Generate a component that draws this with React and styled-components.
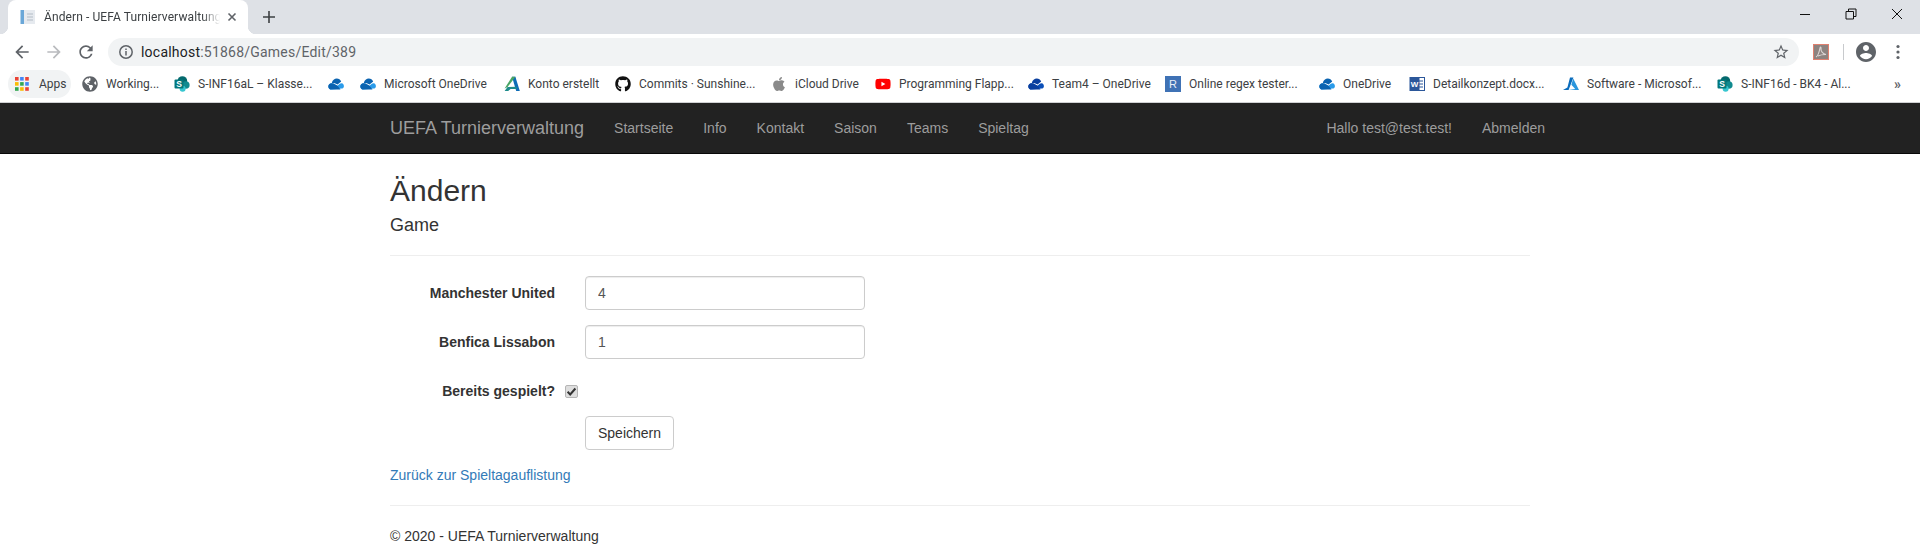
import React from 'react';
import styled, { createGlobalStyle } from 'styled-components';
import { FaGithub, FaApple, FaYoutube, FaGlobeAmericas } from 'react-icons/fa';

const GlobalStyle = createGlobalStyle`
  html, body {
    margin: 0;
    padding: 0;
    background: #fff;
    overflow: hidden;
  }
  body {
    font-family: "Liberation Sans", Arial, sans-serif;
    font-size: 14px;
    line-height: 20px;
    color: #333;
  }
  * { box-sizing: border-box; }
`;

const UI_FONT = `Roboto, "Noto Sans", Arial, sans-serif`;

/* browser chrome */
const TabStrip = styled.div`
  display: flex;
  align-items: stretch;
  height: 34px;
  padding-left: 8px;
  background: #dee1e6;
`;

const Tab = styled.div`
  position: relative;
  display: flex;
  align-items: center;
  width: 240px;
  padding-left: 12px;
  background: #fff;
  border-radius: 8px 8px 0 0;
  &::before, &::after {
    content: '';
    position: absolute;
    bottom: 0;
    width: 8px;
    height: 8px;
  }
  &::before {
    left: -8px;
    background: radial-gradient(circle at 0 0, #dee1e6 8px, #fff 8.5px);
  }
  &::after {
    right: -8px;
    background: radial-gradient(circle at 100% 0, #dee1e6 8px, #fff 8.5px);
  }
`;

const TabTitle = styled.span`
  width: 176px;
  margin-left: 8px;
  overflow: hidden;
  white-space: nowrap;
  font-family: ${UI_FONT};
  font-size: 12px;
  letter-spacing: 0.1px;
  color: #3c4043;
  -webkit-mask-image: linear-gradient(to right, #000 90%, transparent);
  mask-image: linear-gradient(to right, #000 90%, transparent);
`;

const TabClose = styled.span`
  display: flex;
  margin-left: 7px;
  color: #5f6368;
`;

const NewTab = styled.span`
  display: flex;
  align-items: center;
  margin-left: 15px;
  color: #3c4043;
`;

const WindowControls = styled.div`
  display: flex;
  margin-left: auto;
`;

const WindowButton = styled.span`
  display: flex;
  justify-content: center;
  align-items: flex-start;
  width: 46px;
  padding-top: 8px;
  color: #111;
`;

const Toolbar = styled.div`
  display: flex;
  align-items: center;
  height: 32px;
  padding: 4px 0 0 6px;
  background: #fff;
`;

const NavButton = styled.span`
  display: flex;
  justify-content: center;
  width: 32px;
  color: ${p => (p.$disabled ? '#b9bbbe' : '#5f6368')};
`;

const Omnibox = styled.div`
  display: flex;
  align-items: center;
  width: 1691px;
  height: 28px;
  margin-left: 6px;
  padding: 0 9px 0 10px;
  border-radius: 14px;
  background: #f1f3f4;
  font-family: ${UI_FONT};
  font-size: 14px;
  letter-spacing: 0.22px;
  color: #5f6368;
`;

const UrlHost = styled.span`
  margin-left: 7px;
  color: #202124;
`;

const StarButton = styled.span`
  display: flex;
  margin-left: auto;
  color: #5f6368;
`;

const PdfBadge = styled.span`
  display: flex;
  width: 16px;
  height: 16px;
  margin-left: 14px;
  background: #8d8380;
  border: 1px solid #e0806f;
`;

const ToolbarDivider = styled.span`
  width: 1px;
  height: 16px;
  margin-left: 14px;
  background: #c8cacd;
`;

const Avatar = styled.span`
  display: flex;
  margin-left: 12px;
  color: #5f6368;
`;

const MenuDots = styled.span`
  display: flex;
  margin-left: 20px;
  color: #5f6368;
`;

const BookmarkBar = styled.div`
  display: flex;
  align-items: center;
  height: 37px;
  padding: 0 0 1px 8px;
  background: #fff;
  border-bottom: 1px solid #d0d1d3;
  font-family: ${UI_FONT};
  font-size: 12px;
  color: #3c4043;
  white-space: nowrap;
`;

const AppsChip = styled.span`
  display: flex;
  align-items: center;
  gap: 10px;
  width: 63px;
  height: 28px;
  margin-right: 3px;
  padding-left: 7px;
  border-radius: 14px;
  background: #f1f3f4;
`;

const Bookmark = styled.span`
  display: flex;
  align-items: center;
  flex: none;
  gap: 8px;
  width: ${p => p.$width}px;
  padding-left: 8px;
`;

const BookmarkIcon = styled.span`
  display: flex;
  flex: none;
  width: 16px;
  height: 16px;
  color: ${p => p.$color || 'inherit'};
`;

const Chevrons = styled.span`
  margin-left: 34px;
  font-size: 14px;
  font-weight: 700;
  color: #5f6368;
`;

/* site */
const Navbar = styled.nav`
  height: 51px;
  background: #222;
  border-bottom: 1px solid #080808;
`;

const NavInner = styled.div`
  display: flex;
  width: 1170px;
  margin: 0 auto;
`;

const Brand = styled.a`
  padding: 15px;
  font-size: 18px;
  line-height: 20px;
  color: #9d9d9d;
`;

const NavLink = styled.a`
  padding: 15px;
  line-height: 20px;
  color: #9d9d9d;
`;

const NavRight = styled.div`
  display: flex;
  margin-left: auto;
  margin-right: -15px;
`;

const Container = styled.main`
  width: 1170px;
  margin: 0 auto;
  padding: 20px 15px 0;
`;

const Title = styled.h2`
  margin: 0 0 8px;
  font-size: 30px;
  font-weight: 500;
  line-height: 33px;
`;

const Subtitle = styled.h4`
  margin: 0 0 10px;
  font-size: 18px;
  font-weight: 500;
  line-height: 20px;
`;

const Rule = styled.hr`
  height: 1px;
  margin: 20px 0;
  border: 0;
  background: #eee;
`;

const FormRow = styled.div`
  display: flex;
  margin-bottom: 15px;
`;

const FieldLabel = styled.label`
  width: 165px;
  padding-top: 7px;
  font-weight: 700;
  text-align: right;
`;

const TextInput = styled.input`
  width: 280px;
  height: 34px;
  margin-left: 30px;
  padding: 6px 12px;
  border: 1px solid #ccc;
  border-radius: 4px;
  font: inherit;
  color: #555;
  box-shadow: inset 0 1px 1px rgba(0, 0, 0, 0.075);
`;

const CheckBox = styled.input`
  appearance: none;
  width: 13px;
  height: 13px;
  margin: 11px 0 0 10px;
  border: 1px solid #b5b5b5;
  border-radius: 2px;
  background: #dedede url("data:image/svg+xml,%3Csvg xmlns='http://www.w3.org/2000/svg' viewBox='0 0 13 13'%3E%3Cpath d='M2.6 6.8l2.6 2.7 5.2-6' fill='none' stroke='%23333' stroke-width='2'/%3E%3C/svg%3E") center / 13px no-repeat;
`;

const SaveButton = styled.button`
  height: 34px;
  margin-left: 195px;
  padding: 6px 12px;
  border: 1px solid #ccc;
  border-radius: 4px;
  background: #fff;
  font: inherit;
  color: #333;
`;

const BackLink = styled.a`
  display: block;
  color: #337ab7;
`;

const Footer = styled.footer`
  margin: 0;
`;

/* small drawings */
const OneDriveCloud = ({ color = '#0b63b0', light = '#2a9bea' }) => (
  <svg viewBox="0 0 16 16" width="16" height="16">
    <path d="M3.8 7C4.4 4.2 6.5 2.6 8.8 2.6c2 0 3.6 1.1 4.4 3L9.6 8.6 6.8 7.2z" fill={color} />
    <path d="M3.6 13.6C1.7 13.6.3 12.2.3 10.4c0-1.8 1.4-3.2 3.2-3.2 1.3 0 2.4.4 3.2 1l2.8 1.5 2-1.7c.8-.6 1.6-.9 2.3-.7 1.2.3 2.1 1.4 2.1 2.9 0 1.4-1.1 2.4-2.4 2.4z" fill={light} />
    <path d="M3.6 13.6C1.7 13.6.3 12.2.3 10.4c0-1.8 1.4-3.2 3.2-3.2 1.3 0 2.4.4 3.2 1l2.8 1.5 3 3.9z" fill={color} />
  </svg>
);

const SharePointIcon = () => (
  <svg viewBox="0 0 16 16" width="16" height="16">
    <circle cx="8.4" cy="5" r="4.8" fill="#04696d" />
    <circle cx="11.8" cy="9" r="3.8" fill="#108a8f" />
    <circle cx="8.6" cy="12.8" r="3" fill="#37c6d0" />
    <rect x="0.5" y="3.4" width="9" height="9.2" rx="1" fill="#03787c" />
    <text x="5" y="10.8" textAnchor="middle" fontSize="8.5" fontWeight="700" fontFamily="Liberation Sans" fill="#fff">S</text>
  </svg>
);

const AutodeskIcon = () => (
  <svg viewBox="0 0 16 16" width="16" height="16">
    <path d="M8 .8h3.4L15.8 15h-3.6z" fill="#0d6cb6" />
    <path d="M8 .8h3.4L3.6 11 .6 12.6z" fill="#4aa564" />
    <path d="M.6 15l3-4 8.8-.2.6 2.2-6.4 0-2.4 2z" fill="#1d8b8b" />
  </svg>
);

const WordIcon = () => (
  <svg viewBox="0 0 16 16" width="16" height="16">
    <rect x="6" y="1.5" width="9.5" height="13" fill="#fff" stroke="#2b579a" />
    <path d="M9 5h5M9 8h5M9 11h5" stroke="#2b579a" />
    <rect x="0.5" y="1" width="10" height="14" fill="#2b579a" />
    <text x="5.5" y="11" textAnchor="middle" fontSize="8" fontWeight="700" fontFamily="Liberation Sans" fill="#fff">W</text>
  </svg>
);

const RegexIcon = () => (
  <svg viewBox="0 0 16 16" width="16" height="16">
    <rect width="16" height="16" fill="#3f72b5" />
    <text x="8" y="12" textAnchor="middle" fontSize="11" fontFamily="Liberation Sans" fill="#e8eef7">R</text>
  </svg>
);

const AzureIcon = () => (
  <svg viewBox="0 0 16 16" width="16" height="16">
    <path d="M7 1.6h3.4L5.6 14H0L4.4 11.4z" fill="#0a6cbc" />
    <path d="M10.2 2.4L16 14H5.6l6.6-1-3.8-4.2z" fill="#2a96dc" />
  </svg>
);

const AppsGrid = () => (
  <svg viewBox="0 0 14 14" width="14" height="14">
    {['#ea4335', '#4285f4', '#ea4335', '#fbbc05', '#34a853', '#4285f4', '#34a853', '#fbbc05', '#ea4335'].map((c, i) => (
      <rect key={i} x={(i % 3) * 5.1} y={Math.floor(i / 3) * 5.1} width="3.6" height="3.6" fill={c} />
    ))}
  </svg>
);

const bookmarks = [
  { label: 'Working...', width: 92, icon: <BookmarkIcon $color="#5f6368"><FaGlobeAmericas size={16} /></BookmarkIcon> },
  { label: 'S-INF16aL – Klasse...', width: 154, icon: <BookmarkIcon><SharePointIcon /></BookmarkIcon> },
  { label: '', width: 32, icon: <BookmarkIcon><OneDriveCloud /></BookmarkIcon> },
  { label: 'Microsoft OneDrive', width: 144, icon: <BookmarkIcon><OneDriveCloud /></BookmarkIcon> },
  { label: 'Konto erstellt', width: 111, icon: <BookmarkIcon><AutodeskIcon /></BookmarkIcon> },
  { label: 'Commits · Sunshine...', width: 156, icon: <BookmarkIcon $color="#111"><FaGithub size={16} /></BookmarkIcon> },
  { label: 'iCloud Drive', width: 104, icon: <BookmarkIcon $color="#8a8a8a"><FaApple size={16} /></BookmarkIcon> },
  { label: 'Programming Flapp...', width: 153, icon: <BookmarkIcon $color="#f00"><FaYoutube size={16} /></BookmarkIcon> },
  { label: 'Team4 – OneDrive', width: 137, icon: <BookmarkIcon><OneDriveCloud color="#0a3f9e" light="#0b4fb8" /></BookmarkIcon> },
  { label: 'Online regex tester...', width: 154, icon: <BookmarkIcon><RegexIcon /></BookmarkIcon> },
  { label: 'OneDrive', width: 90, icon: <BookmarkIcon><OneDriveCloud /></BookmarkIcon> },
  { label: 'Detailkonzept.docx...', width: 154, icon: <BookmarkIcon><WordIcon /></BookmarkIcon> },
  { label: 'Software - Microsof...', width: 154, icon: <BookmarkIcon><AzureIcon /></BookmarkIcon> },
  { label: 'S-INF16d - BK4 - Al...', width: 151, icon: <BookmarkIcon><SharePointIcon /></BookmarkIcon> },
];

const leftLinks = ['Startseite', 'Info', 'Kontakt', 'Saison', 'Teams', 'Spieltag'];

const App = () => (
  <>
    <GlobalStyle />
    <TabStrip>
      <Tab>
        <svg viewBox="0 0 16 16" width="16" height="16">
          <rect x="0.5" y="1" width="5" height="14" fill="#6aa7d8" />
          <rect x="4" y="1" width="11" height="14" fill="#e6eaef" />
          <path d="M7 5h6M7 8h6M7 11h6" stroke="#b3bcc6" />
        </svg>
        <TabTitle>Ändern - UEFA Turnierverwaltung</TabTitle>
        <TabClose>
          <svg viewBox="0 0 10 10" width="10" height="10"><path d="M1.5 1.5l7 7M8.5 1.5l-7 7" stroke="currentColor" strokeWidth="1.6" /></svg>
        </TabClose>
      </Tab>
      <NewTab>
        <svg viewBox="0 0 12 12" width="12" height="12"><path d="M6 0v12M0 6h12" stroke="currentColor" strokeWidth="1.6" /></svg>
      </NewTab>
      <WindowControls>
        <WindowButton>
          <svg viewBox="0 0 12 12" width="12" height="12"><path d="M1 6.5h10" stroke="currentColor" /></svg>
        </WindowButton>
        <WindowButton>
          <svg viewBox="0 0 12 12" width="12" height="12"><path d="M1 3.5h7.5V11H1zM3.5 3.5V1H11v7.5H8.5" fill="none" stroke="currentColor" /></svg>
        </WindowButton>
        <WindowButton>
          <svg viewBox="0 0 12 12" width="12" height="12"><path d="M1 1l10 10M11 1L1 11" stroke="currentColor" /></svg>
        </WindowButton>
      </WindowControls>
    </TabStrip>

    <Toolbar>
      <NavButton>
        <svg viewBox="0 0 24 24" width="20" height="20" fill="currentColor"><path d="M20 11H7.83l5.59-5.59L12 4l-8 8 8 8 1.41-1.41L7.83 13H20v-2z" /></svg>
      </NavButton>
      <NavButton $disabled>
        <svg viewBox="0 0 24 24" width="20" height="20" fill="currentColor"><path d="M4 11h12.17l-5.59-5.59L12 4l8 8-8 8-1.41-1.41L16.17 13H4v-2z" /></svg>
      </NavButton>
      <NavButton>
        <svg viewBox="0 0 24 24" width="20" height="20" fill="currentColor"><path d="M17.65 6.35A7.958 7.958 0 0012 4c-4.42 0-7.99 3.58-7.99 8s3.57 8 7.99 8c3.73 0 6.84-2.55 7.73-6h-2.08A5.99 5.99 0 0112 18c-3.31 0-6-2.69-6-6s2.69-6 6-6c1.66 0 3.14.69 4.22 1.78L13 11h7V4l-2.35 2.35z" /></svg>
      </NavButton>
      <Omnibox>
        <svg viewBox="0 0 16 16" width="16" height="16">
          <circle cx="8" cy="8" r="6.2" fill="none" stroke="#5f6368" strokeWidth="1.5" />
          <path d="M8 7v4.4M8 4.4v1.5" stroke="#5f6368" strokeWidth="1.5" />
        </svg>
        <UrlHost>localhost</UrlHost>:51868/Games/Edit/389
        <StarButton>
          <svg viewBox="0 0 24 24" width="18" height="18" fill="currentColor"><path d="M22 9.24l-7.19-.62L12 2 9.19 8.63 2 9.24l5.46 4.73L5.82 21 12 17.27 18.18 21l-1.63-7.03L22 9.24zM12 15.4l-3.76 2.27 1-4.28-3.32-2.88 4.38-.38L12 6.1l1.71 4.04 4.38.38-3.32 2.88 1 4.28L12 15.4z" /></svg>
        </StarButton>
      </Omnibox>
      <PdfBadge>
        <svg viewBox="0 0 14 14" width="14" height="14"><path d="M2 12c2-1 3-4 4-9 .3-1.5 1.4-1 1 1-.3 2 2 5 5 5.5-2.5 0-6 .5-8 1.5" fill="none" stroke="#ddd6d4" strokeWidth="1.1" /></svg>
      </PdfBadge>
      <ToolbarDivider />
      <Avatar>
        <svg viewBox="2 2 20 20" width="20" height="20" fill="currentColor"><path d="M12 2C6.48 2 2 6.48 2 12s4.48 10 10 10 10-4.48 10-10S17.52 2 12 2zm0 3c1.66 0 3 1.34 3 3s-1.34 3-3 3-3-1.34-3-3 1.34-3 3-3zm0 14.2c-2.5 0-4.71-1.28-6-3.22.03-1.99 4-3.08 6-3.08 1.99 0 5.97 1.09 6 3.08-1.29 1.94-3.5 3.22-6 3.22z" /></svg>
      </Avatar>
      <MenuDots>
        <svg viewBox="0 0 4 16" width="4" height="16" fill="currentColor"><circle cx="2" cy="2.5" r="1.6" /><circle cx="2" cy="8" r="1.6" /><circle cx="2" cy="13.5" r="1.6" /></svg>
      </MenuDots>
    </Toolbar>

    <BookmarkBar>
      <AppsChip><AppsGrid />Apps</AppsChip>
      {bookmarks.map((b, i) => (
        <Bookmark key={i} $width={b.width}>{b.icon}{b.label}</Bookmark>
      ))}
      <Chevrons>»</Chevrons>
    </BookmarkBar>

    <Navbar>
      <NavInner>
        <Brand>UEFA Turnierverwaltung</Brand>
        {leftLinks.map(l => <NavLink key={l}>{l}</NavLink>)}
        <NavRight>
          <NavLink>Hallo test@test.test!</NavLink>
          <NavLink>Abmelden</NavLink>
        </NavRight>
      </NavInner>
    </Navbar>

    <Container>
      <Title>Ändern</Title>
      <Subtitle>Game</Subtitle>
      <Rule />
      <FormRow>
        <FieldLabel>Manchester United</FieldLabel>
        <TextInput type="text" value="4" readOnly />
      </FormRow>
      <FormRow>
        <FieldLabel>Benfica Lissabon</FieldLabel>
        <TextInput type="text" value="1" readOnly />
      </FormRow>
      <FormRow>
        <FieldLabel>Bereits gespielt?</FieldLabel>
        <CheckBox type="checkbox" checked readOnly />
      </FormRow>
      <FormRow>
        <SaveButton>Speichern</SaveButton>
      </FormRow>
      <BackLink>Zurück zur Spieltagauflistung</BackLink>
      <Rule />
      <Footer>© 2020 - UEFA Turnierverwaltung</Footer>
    </Container>
  </>
);

export default App;
